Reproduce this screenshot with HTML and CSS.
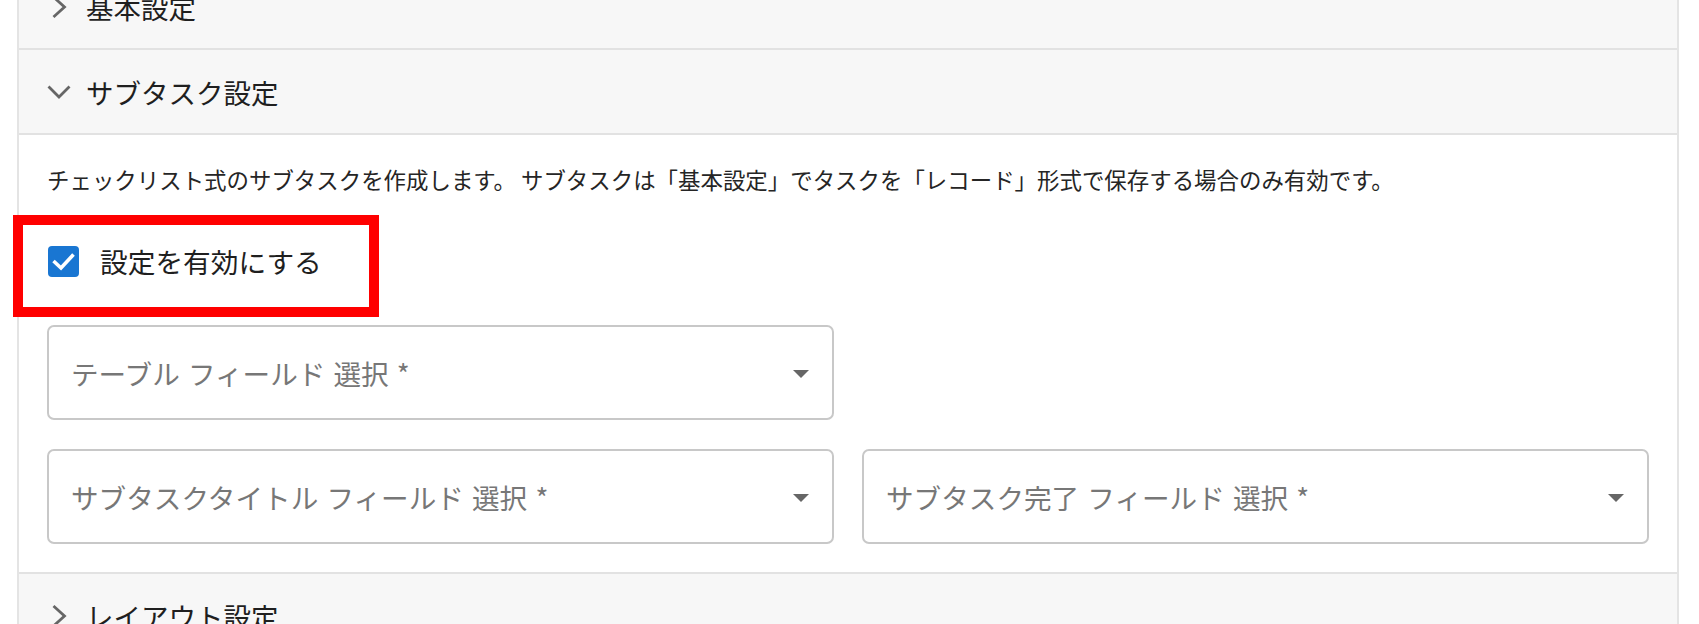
FILE: index.html
```html
<!DOCTYPE html>
<html lang="ja">
<head>
<meta charset="utf-8">
<title>サブタスク設定</title>
<link rel="stylesheet" href="styles.css">
</head>
<body>
<div class="panel">
  <div class="acc-header">
    <span class="chev"><svg viewBox="0 0 24 24" width="24" height="24"><polyline points="6.5,2 17.5,12 6.5,22" /></svg></span>
    <span class="acc-title">基本設定</span>
  </div>
  <div class="acc-header">
    <span class="chev"><svg viewBox="0 0 24 24" width="24" height="24"><polyline points="1.5,6.5 12,17 22.5,6.5" /></svg></span>
    <span class="acc-title">サブタスク設定</span>
  </div>
  <div class="acc-body">
    <p class="desc">チェックリスト式のサブタスクを作成します。 サブタスクは「基本設定」でタスクを「レコード」形式で保存する場合のみ有効です。</p>
    <div class="check-row">
      <span class="checkbox"><svg viewBox="0 0 31 31" width="31" height="31"><polyline points="5.5,15 13,22 25.5,8.5" /></svg></span>
      <span class="check-label">設定を有効にする</span>
      <span class="highlight"></span>
    </div>
    <div class="fields">
      <div class="select"><span class="ph">テーブル フィールド 選択 *</span><span class="arrow"></span></div>
      <div class="select"><span class="ph">サブタスクタイトル フィールド 選択 *</span><span class="arrow"></span></div>
      <div class="select"><span class="ph">サブタスク完了 フィールド 選択 *</span><span class="arrow"></span></div>
    </div>
  </div>
  <div class="acc-header">
    <span class="chev"><svg viewBox="0 0 24 24" width="24" height="24"><polyline points="6.5,2 17.5,12 6.5,22" /></svg></span>
    <span class="acc-title">レイアウト設定</span>
  </div>
</div>
</body>
</html>
```

FILE: styles.css
```css
html, body {
  margin: 0;
  padding: 0;
  background: #ffffff;
}
body {
  font-family: "Noto Sans CJK JP", "Noto Sans", sans-serif;
  color: #222222;
  overflow: hidden;
  height: 624px;
}
.panel {
  margin-top: -35px;
  margin-left: 17px;
  width: 1662px;
  box-sizing: border-box;
  border-left: 2px solid #e4e4e4;
  border-right: 2px solid #e4e4e4;
}
.acc-header {
  height: 83px;
  background: #f7f7f7;
  border-bottom: 2px solid #e2e2e2;
  display: flex;
  align-items: center;
  padding-left: 28px;
}
.chev {
  width: 24px;
  height: 24px;
  display: flex;
  align-items: center;
  justify-content: center;
  margin-right: 15px;
}
.chev svg {
  display: block;
  fill: none;
  stroke: #666666;
  stroke-width: 2.8;
}
.acc-title {
  font-size: 27.5px;
  line-height: 40px;
  color: #1f1f1f;
}
.acc-body {
  background: #ffffff;
  border-bottom: 2px solid #e2e2e2;
  padding: 28px 28px 28px 28px;
  display: flex;
  flex-direction: column;
}
.desc {
  margin: 0;
  font-size: 22.45px;
  line-height: 33px;
  color: #252525;
  white-space: nowrap;
}
.check-row {
  position: relative;
  margin-top: 34px;
  height: 62px;
  display: flex;
  align-items: center;
  padding-left: 1px;
}
.checkbox {
  width: 31px;
  height: 31px;
  border-radius: 4px;
  background: #1976d2;
  display: block;
}
.checkbox svg {
  display: block;
  fill: none;
  stroke: #ffffff;
  stroke-width: 3.6;
}
.check-label {
  margin-left: 21px;
  font-size: 27.7px;
  line-height: 40px;
  color: #1f1f1f;
}
.highlight {
  position: absolute;
  left: -34px;
  top: -15px;
  width: 366px;
  height: 102px;
  box-sizing: border-box;
  border: 10px solid #ff0000;
  pointer-events: none;
}
.fields {
  margin-top: 33px;
  display: grid;
  grid-template-columns: 1fr 1fr;
  column-gap: 28px;
  row-gap: 29px;
}
.fields .select:first-child {
  grid-column: 1 / 2;
  grid-row: 1;
}
.fields .select:nth-child(2) {
  grid-column: 1 / 2;
  grid-row: 2;
}
.fields .select:nth-child(3) {
  grid-column: 2 / 3;
  grid-row: 2;
}
.select {
  height: 95px;
  box-sizing: border-box;
  border: 2px solid #c8c8c8;
  border-radius: 7px;
  display: flex;
  align-items: center;
  justify-content: space-between;
  padding: 0 23px 0 22px;
}
.ph {
  font-size: 27.6px;
  line-height: 40px;
  word-spacing: 2px;
  color: #777777;
  white-space: nowrap;
}
.arrow {
  width: 0;
  height: 0;
  border-left: 8.5px solid transparent;
  border-right: 8.5px solid transparent;
  border-top: 8px solid #666666;
  margin-top: 2px;
}
```
